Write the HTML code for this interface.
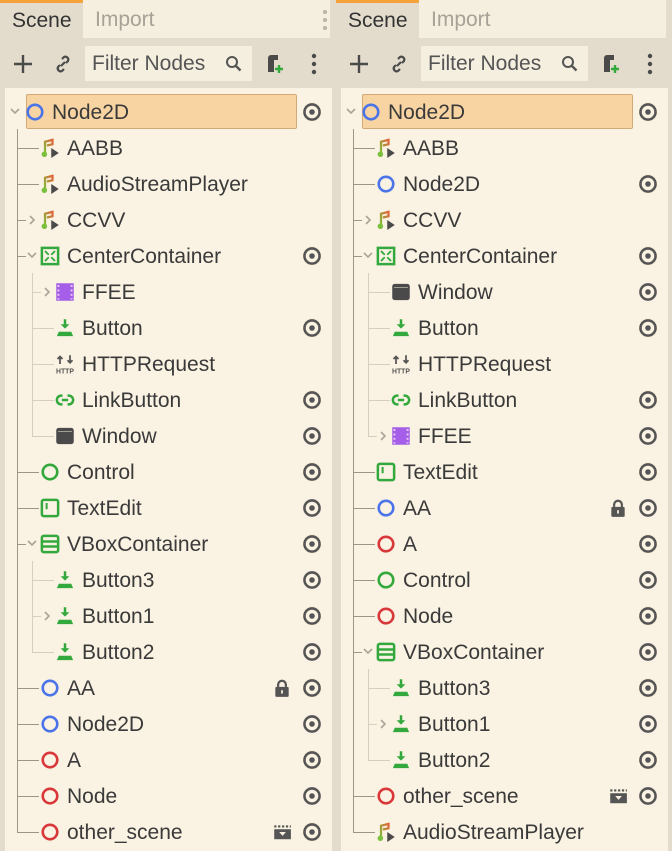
<!DOCTYPE html>
<html><head><meta charset="utf-8"><style>
*{margin:0;padding:0;box-sizing:border-box}
body{width:672px;height:851px;background:#e3dccc;position:relative;overflow:hidden;font-family:"Liberation Sans","DejaVu Sans",sans-serif;color:#3a3a3a}
.p{position:absolute;top:0;width:336px;height:851px}
.tabs{position:absolute;left:0;top:0;width:336px;height:40px}
.scene{position:absolute;left:0;top:0;width:83px;height:40px;background:#e3dccc;border-top:3px solid #f5a33a;font-size:21px;line-height:36px;padding-left:12px;color:#333}
.imp{position:absolute;left:83px;top:0;width:247px;height:38px;background:#f5efe0;font-size:21px;line-height:40px;padding-left:12px;color:#a8a296}
.filter{position:absolute;left:85px;top:46px;width:167px;height:35px;background:#f5efe0;font-size:21px;line-height:36px;padding-left:7px;color:#555}
.tree{position:absolute;left:5px;top:88px;width:327px;height:763px;background:#faf2e2}
.sel{position:absolute;left:26px;top:94px;width:271px;height:35px;background:#f8d4a2;border:1px solid #d3a978;border-radius:2px}
.r{position:absolute;left:0;width:336px;height:36px}
.r .t{position:absolute;top:2px;line-height:36px;font-size:21px;color:#3a3a3a;white-space:nowrap}
.r .ic{position:absolute;top:9px;width:20px;height:20px}
.r .ar{position:absolute;top:13px;width:10px;height:12px}
.r .h{position:absolute;top:19px;height:1px}
.l0 .ic{left:25px}.l0 .t{left:52px}.l0 .ar{left:10px}
.l1 .ic{left:40px}.l1 .t{left:67px}.l1 .ar{left:27px}.l1 .h{left:17px;width:22px;background:#9c958a}
.l1 .h.s{width:9px}
.l2 .ic{left:55px}.l2 .t{left:82px}.l2 .ar{left:42px}.l2 .h{left:32px;width:22px;background:#d6cebd}
.l2 .h.s{width:9px}
.eye{position:absolute;left:302px;top:9px;width:20px;height:20px}
.ex{position:absolute;left:272px;top:9px;width:20px;height:20px}
.v1{position:absolute;left:17px;width:1px;background:#9c958a}
.v2{position:absolute;left:32px;width:1px;background:#d6cebd}
</style></head><body>
<svg width="0" height="0" style="position:absolute">
<defs>
<linearGradient id="ag" x1="0" y1="1" x2="1" y2="0"><stop offset="0" stop-color="#7fbf3a"/><stop offset="1" stop-color="#e2643a"/></linearGradient>
<g id="cb"><circle cx="8" cy="8" r="5.8" fill="none" stroke="#4a74e8" stroke-width="2.1"/></g>
<g id="cr"><circle cx="8" cy="8" r="5.8" fill="none" stroke="#d9383b" stroke-width="2.1"/></g>
<g id="cg"><circle cx="8" cy="8" r="5.8" fill="none" stroke="#33a93d" stroke-width="2.1"/></g>
<g id="au"><path d="M4 13V3l6-1.5v3.5L5.5 6" fill="none" stroke="url(#ag)" stroke-width="1.8"/><circle cx="3.5" cy="13" r="2.2" fill="#7cc03f"/><path d="M9 8l6 4-6 4z" fill="#4a4a4a"/></g>
<g id="cc"><rect x="1.5" y="1.5" width="13" height="13" fill="none" stroke="#33a93d" stroke-width="2"/><path d="M4 4l3 3M12 4l-3 3M4 12l3-3M12 12l-3-3" stroke="#33a93d" stroke-width="1.5"/></g>
<g id="fi"><rect x="1" y="1" width="14" height="14" fill="#a45ee8"/><g fill="#e8d3f8"><rect x="2" y="2.5" width="1.5" height="1.5"/><rect x="2" y="6" width="1.5" height="1.5"/><rect x="2" y="9.5" width="1.5" height="1.5"/><rect x="2" y="13" width="1.5" height="1"/><rect x="12.5" y="2.5" width="1.5" height="1.5"/><rect x="12.5" y="6" width="1.5" height="1.5"/><rect x="12.5" y="9.5" width="1.5" height="1.5"/><rect x="12.5" y="13" width="1.5" height="1"/></g></g>
<g id="bt"><path d="M7 1h2v4h2.5L8 8.5 4.5 5H7z" fill="#33a93d"/><path d="M3 11h10l1.5 3.5h-13z" fill="#33a93d"/></g>
<g id="ht"><path d="M4 8V2M2 4l2-2 2 2M12 1v6M10 5l2 2 2-2" fill="none" stroke="#555" stroke-width="1.4"/><text x="8" y="15.5" font-size="5.5" font-family="Liberation Sans" font-weight="bold" text-anchor="middle" fill="#555">HTTP</text></g>
<g id="lk"><path d="M6 4.5H5a3.5 3.5 0 0 0 0 7h1M10 4.5h1a3.5 3.5 0 0 1 0 7h-1M5.5 8h5" fill="none" stroke="#33a93d" stroke-width="2"/></g>
<g id="wi"><rect x="1" y="1.5" width="14" height="13" rx="2" fill="#4a4a4a"/><rect x="2.5" y="4" width="11" height="0.8" fill="#faf2e2" opacity=".5"/></g>
<g id="te"><rect x="1.5" y="1.5" width="13" height="13" rx="1.5" fill="none" stroke="#33a93d" stroke-width="2"/><rect x="4.5" y="4" width="1.6" height="5" fill="#33a93d"/></g>
<g id="vb"><rect x="1.5" y="1.5" width="13" height="13" rx="1.5" fill="none" stroke="#33a93d" stroke-width="2"/><path d="M2 6h12M2 10h12" stroke="#33a93d" stroke-width="2"/></g>
<g id="ey"><circle cx="9" cy="9" r="6.8" fill="none" stroke="#555" stroke-width="2.3"/><circle cx="9" cy="9" r="2.5" fill="#555"/></g>
<g id="lo"><path d="M5.5 8V6a3.5 3.5 0 0 1 7 0v2" fill="none" stroke="#555" stroke-width="2"/><rect x="3" y="8" width="12" height="9" rx="1" fill="#555"/><rect x="8.2" y="11" width="1.6" height="3" fill="#faf2e2"/></g>
<g id="cl"><path d="M2 4h2M5.5 4h2M9 4h2M12.5 4h2M16 4h1" stroke="#555" stroke-width="2"/><rect x="2" y="6.5" width="15" height="9" fill="#555"/><path d="M6.5 9h6l-3 3.5z" fill="#faf2e2"/></g>
<g id="ad"><path d="M1 3l4 4 4-4" fill="none" stroke="#aaa398" stroke-width="1.6"/></g>
<g id="ar"><path d="M3 2l4 4-4 4" fill="none" stroke="#aaa398" stroke-width="1.6"/></g>
</defs></svg>

<!-- LEFT PANEL -->
<div class="p" style="left:0">
<div class="tabs"><div class="scene">Scene</div><div class="imp">Import</div>
<svg style="position:absolute;left:322px;top:9px" width="6" height="22"><circle cx="3" cy="3" r="2" fill="#bbb4a6"/><circle cx="3" cy="11" r="2" fill="#bbb4a6"/><circle cx="3" cy="19" r="2" fill="#bbb4a6"/></svg></div>
<svg style="position:absolute;left:12px;top:53px" width="22" height="22"><path d="M11 2v18M2 11h18" stroke="#4a4a4a" stroke-width="2.4"/></svg>
<svg style="position:absolute;left:53px;top:54px" width="20" height="20"><path d="M8 12l4-4M9 5l2-2a3 3 0 0 1 4 4l-2 2M11 15l-2 2a3 3 0 0 1-4-4l2-2" fill="none" stroke="#4a4a4a" stroke-width="2.2"/></svg>
<div class="filter">Filter Nodes</div>
<svg style="position:absolute;left:225px;top:55px" width="18" height="18"><circle cx="7" cy="7" r="5" fill="none" stroke="#555" stroke-width="2"/><path d="M10.5 10.5l5 5" stroke="#555" stroke-width="2.4"/></svg>
<svg style="position:absolute;left:264px;top:53px" width="22" height="22"><path d="M4 19V5a3 3 0 0 1 3-3h7v5h-4v12z" fill="#4a4a4a"/><path d="M15 12v8M11 16h8" stroke="#33a93d" stroke-width="2.4"/></svg>
<svg style="position:absolute;left:311px;top:53px" width="6" height="22"><circle cx="3" cy="3" r="2.2" fill="#4a4a4a"/><circle cx="3" cy="11" r="2.2" fill="#4a4a4a"/><circle cx="3" cy="19" r="2.2" fill="#4a4a4a"/></svg>
<div class="tree"></div>
<div class="sel"></div>
<div class="v1" style="top:129px;height:704px"></div>
<div class="v2" style="top:273px;height:164px"></div>
<div class="v2" style="top:561px;height:92px"></div>

<div class="r l0" style="top:93px"><svg class="ar" viewBox="0 0 10 12"><use href="#ad"/></svg><svg class="ic" viewBox="0 0 16 16"><use href="#cb"/></svg><span class="t">Node2D</span><svg class="eye" viewBox="0 0 18 18"><use href="#ey"/></svg></div>
<div class="r l1" style="top:129px"><i class="h"></i><svg class="ic" viewBox="0 0 16 16"><use href="#au"/></svg><span class="t">AABB</span></div>
<div class="r l1" style="top:165px"><i class="h"></i><svg class="ic" viewBox="0 0 16 16"><use href="#au"/></svg><span class="t">AudioStreamPlayer</span></div>
<div class="r l1" style="top:201px"><i class="h s"></i><svg class="ar" viewBox="0 0 10 12"><use href="#ar"/></svg><svg class="ic" viewBox="0 0 16 16"><use href="#au"/></svg><span class="t">CCVV</span></div>
<div class="r l1" style="top:237px"><i class="h s"></i><svg class="ar" viewBox="0 0 10 12"><use href="#ad"/></svg><svg class="ic" viewBox="0 0 16 16"><use href="#cc"/></svg><span class="t">CenterContainer</span><svg class="eye" viewBox="0 0 18 18"><use href="#ey"/></svg></div>
<div class="r l2" style="top:273px"><i class="h s"></i><svg class="ar" viewBox="0 0 10 12"><use href="#ar"/></svg><svg class="ic" viewBox="0 0 16 16"><use href="#fi"/></svg><span class="t">FFEE</span></div>
<div class="r l2" style="top:309px"><i class="h"></i><svg class="ic" viewBox="0 0 16 16"><use href="#bt"/></svg><span class="t">Button</span><svg class="eye" viewBox="0 0 18 18"><use href="#ey"/></svg></div>
<div class="r l2" style="top:345px"><i class="h"></i><svg class="ic" viewBox="0 0 16 16"><use href="#ht"/></svg><span class="t">HTTPRequest</span></div>
<div class="r l2" style="top:381px"><i class="h"></i><svg class="ic" viewBox="0 0 16 16"><use href="#lk"/></svg><span class="t">LinkButton</span><svg class="eye" viewBox="0 0 18 18"><use href="#ey"/></svg></div>
<div class="r l2" style="top:417px"><i class="h"></i><svg class="ic" viewBox="0 0 16 16"><use href="#wi"/></svg><span class="t">Window</span><svg class="eye" viewBox="0 0 18 18"><use href="#ey"/></svg></div>
<div class="r l1" style="top:453px"><i class="h"></i><svg class="ic" viewBox="0 0 16 16"><use href="#cg"/></svg><span class="t">Control</span><svg class="eye" viewBox="0 0 18 18"><use href="#ey"/></svg></div>
<div class="r l1" style="top:489px"><i class="h"></i><svg class="ic" viewBox="0 0 16 16"><use href="#te"/></svg><span class="t">TextEdit</span><svg class="eye" viewBox="0 0 18 18"><use href="#ey"/></svg></div>
<div class="r l1" style="top:525px"><i class="h s"></i><svg class="ar" viewBox="0 0 10 12"><use href="#ad"/></svg><svg class="ic" viewBox="0 0 16 16"><use href="#vb"/></svg><span class="t">VBoxContainer</span><svg class="eye" viewBox="0 0 18 18"><use href="#ey"/></svg></div>
<div class="r l2" style="top:561px"><i class="h"></i><svg class="ic" viewBox="0 0 16 16"><use href="#bt"/></svg><span class="t">Button3</span><svg class="eye" viewBox="0 0 18 18"><use href="#ey"/></svg></div>
<div class="r l2" style="top:597px"><i class="h s"></i><svg class="ar" viewBox="0 0 10 12"><use href="#ar"/></svg><svg class="ic" viewBox="0 0 16 16"><use href="#bt"/></svg><span class="t">Button1</span><svg class="eye" viewBox="0 0 18 18"><use href="#ey"/></svg></div>
<div class="r l2" style="top:633px"><i class="h"></i><svg class="ic" viewBox="0 0 16 16"><use href="#bt"/></svg><span class="t">Button2</span><svg class="eye" viewBox="0 0 18 18"><use href="#ey"/></svg></div>
<div class="r l1" style="top:669px"><i class="h"></i><svg class="ic" viewBox="0 0 16 16"><use href="#cb"/></svg><span class="t">AA</span><svg class="ex" viewBox="0 0 18 18"><use href="#lo"/></svg><svg class="eye" viewBox="0 0 18 18"><use href="#ey"/></svg></div>
<div class="r l1" style="top:705px"><i class="h"></i><svg class="ic" viewBox="0 0 16 16"><use href="#cb"/></svg><span class="t">Node2D</span><svg class="eye" viewBox="0 0 18 18"><use href="#ey"/></svg></div>
<div class="r l1" style="top:741px"><i class="h"></i><svg class="ic" viewBox="0 0 16 16"><use href="#cr"/></svg><span class="t">A</span><svg class="eye" viewBox="0 0 18 18"><use href="#ey"/></svg></div>
<div class="r l1" style="top:777px"><i class="h"></i><svg class="ic" viewBox="0 0 16 16"><use href="#cr"/></svg><span class="t">Node</span><svg class="eye" viewBox="0 0 18 18"><use href="#ey"/></svg></div>
<div class="r l1" style="top:813px"><i class="h"></i><svg class="ic" viewBox="0 0 16 16"><use href="#cr"/></svg><span class="t">other_scene</span><svg class="ex" viewBox="0 0 18 18"><use href="#cl"/></svg><svg class="eye" viewBox="0 0 18 18"><use href="#ey"/></svg></div>
</div>

<!-- RIGHT PANEL -->
<div class="p" style="left:336px">
<div class="tabs"><div class="scene">Scene</div><div class="imp">Import</div></div>
<svg style="position:absolute;left:12px;top:53px" width="22" height="22"><path d="M11 2v18M2 11h18" stroke="#4a4a4a" stroke-width="2.4"/></svg>
<svg style="position:absolute;left:53px;top:54px" width="20" height="20"><path d="M8 12l4-4M9 5l2-2a3 3 0 0 1 4 4l-2 2M11 15l-2 2a3 3 0 0 1-4-4l2-2" fill="none" stroke="#4a4a4a" stroke-width="2.2"/></svg>
<div class="filter">Filter Nodes</div>
<svg style="position:absolute;left:225px;top:55px" width="18" height="18"><circle cx="7" cy="7" r="5" fill="none" stroke="#555" stroke-width="2"/><path d="M10.5 10.5l5 5" stroke="#555" stroke-width="2.4"/></svg>
<svg style="position:absolute;left:264px;top:53px" width="22" height="22"><path d="M4 19V5a3 3 0 0 1 3-3h7v5h-4v12z" fill="#4a4a4a"/><path d="M15 12v8M11 16h8" stroke="#33a93d" stroke-width="2.4"/></svg>
<svg style="position:absolute;left:311px;top:53px" width="6" height="22"><circle cx="3" cy="3" r="2.2" fill="#4a4a4a"/><circle cx="3" cy="11" r="2.2" fill="#4a4a4a"/><circle cx="3" cy="19" r="2.2" fill="#4a4a4a"/></svg>
<div class="tree"></div>
<div class="sel"></div>
<div class="v1" style="top:129px;height:704px"></div>
<div class="v2" style="top:273px;height:164px"></div>
<div class="v2" style="top:669px;height:92px"></div>

<div class="r l0" style="top:93px"><svg class="ar" viewBox="0 0 10 12"><use href="#ad"/></svg><svg class="ic" viewBox="0 0 16 16"><use href="#cb"/></svg><span class="t">Node2D</span><svg class="eye" viewBox="0 0 18 18"><use href="#ey"/></svg></div>
<div class="r l1" style="top:129px"><i class="h"></i><svg class="ic" viewBox="0 0 16 16"><use href="#au"/></svg><span class="t">AABB</span></div>
<div class="r l1" style="top:165px"><i class="h"></i><svg class="ic" viewBox="0 0 16 16"><use href="#cb"/></svg><span class="t">Node2D</span><svg class="eye" viewBox="0 0 18 18"><use href="#ey"/></svg></div>
<div class="r l1" style="top:201px"><i class="h s"></i><svg class="ar" viewBox="0 0 10 12"><use href="#ar"/></svg><svg class="ic" viewBox="0 0 16 16"><use href="#au"/></svg><span class="t">CCVV</span></div>
<div class="r l1" style="top:237px"><i class="h s"></i><svg class="ar" viewBox="0 0 10 12"><use href="#ad"/></svg><svg class="ic" viewBox="0 0 16 16"><use href="#cc"/></svg><span class="t">CenterContainer</span><svg class="eye" viewBox="0 0 18 18"><use href="#ey"/></svg></div>
<div class="r l2" style="top:273px"><i class="h"></i><svg class="ic" viewBox="0 0 16 16"><use href="#wi"/></svg><span class="t">Window</span><svg class="eye" viewBox="0 0 18 18"><use href="#ey"/></svg></div>
<div class="r l2" style="top:309px"><i class="h"></i><svg class="ic" viewBox="0 0 16 16"><use href="#bt"/></svg><span class="t">Button</span><svg class="eye" viewBox="0 0 18 18"><use href="#ey"/></svg></div>
<div class="r l2" style="top:345px"><i class="h"></i><svg class="ic" viewBox="0 0 16 16"><use href="#ht"/></svg><span class="t">HTTPRequest</span></div>
<div class="r l2" style="top:381px"><i class="h"></i><svg class="ic" viewBox="0 0 16 16"><use href="#lk"/></svg><span class="t">LinkButton</span><svg class="eye" viewBox="0 0 18 18"><use href="#ey"/></svg></div>
<div class="r l2" style="top:417px"><i class="h s"></i><svg class="ar" viewBox="0 0 10 12"><use href="#ar"/></svg><svg class="ic" viewBox="0 0 16 16"><use href="#fi"/></svg><span class="t">FFEE</span><svg class="eye" viewBox="0 0 18 18"><use href="#ey"/></svg></div>
<div class="r l1" style="top:453px"><i class="h"></i><svg class="ic" viewBox="0 0 16 16"><use href="#te"/></svg><span class="t">TextEdit</span><svg class="eye" viewBox="0 0 18 18"><use href="#ey"/></svg></div>
<div class="r l1" style="top:489px"><i class="h"></i><svg class="ic" viewBox="0 0 16 16"><use href="#cb"/></svg><span class="t">AA</span><svg class="ex" viewBox="0 0 18 18"><use href="#lo"/></svg><svg class="eye" viewBox="0 0 18 18"><use href="#ey"/></svg></div>
<div class="r l1" style="top:525px"><i class="h"></i><svg class="ic" viewBox="0 0 16 16"><use href="#cr"/></svg><span class="t">A</span><svg class="eye" viewBox="0 0 18 18"><use href="#ey"/></svg></div>
<div class="r l1" style="top:561px"><i class="h"></i><svg class="ic" viewBox="0 0 16 16"><use href="#cg"/></svg><span class="t">Control</span><svg class="eye" viewBox="0 0 18 18"><use href="#ey"/></svg></div>
<div class="r l1" style="top:597px"><i class="h"></i><svg class="ic" viewBox="0 0 16 16"><use href="#cr"/></svg><span class="t">Node</span><svg class="eye" viewBox="0 0 18 18"><use href="#ey"/></svg></div>
<div class="r l1" style="top:633px"><i class="h s"></i><svg class="ar" viewBox="0 0 10 12"><use href="#ad"/></svg><svg class="ic" viewBox="0 0 16 16"><use href="#vb"/></svg><span class="t">VBoxContainer</span><svg class="eye" viewBox="0 0 18 18"><use href="#ey"/></svg></div>
<div class="r l2" style="top:669px"><i class="h"></i><svg class="ic" viewBox="0 0 16 16"><use href="#bt"/></svg><span class="t">Button3</span><svg class="eye" viewBox="0 0 18 18"><use href="#ey"/></svg></div>
<div class="r l2" style="top:705px"><i class="h s"></i><svg class="ar" viewBox="0 0 10 12"><use href="#ar"/></svg><svg class="ic" viewBox="0 0 16 16"><use href="#bt"/></svg><span class="t">Button1</span><svg class="eye" viewBox="0 0 18 18"><use href="#ey"/></svg></div>
<div class="r l2" style="top:741px"><i class="h"></i><svg class="ic" viewBox="0 0 16 16"><use href="#bt"/></svg><span class="t">Button2</span><svg class="eye" viewBox="0 0 18 18"><use href="#ey"/></svg></div>
<div class="r l1" style="top:777px"><i class="h"></i><svg class="ic" viewBox="0 0 16 16"><use href="#cr"/></svg><span class="t">other_scene</span><svg class="ex" viewBox="0 0 18 18"><use href="#cl"/></svg><svg class="eye" viewBox="0 0 18 18"><use href="#ey"/></svg></div>
<div class="r l1" style="top:813px"><i class="h"></i><svg class="ic" viewBox="0 0 16 16"><use href="#au"/></svg><span class="t">AudioStreamPlayer</span></div>
</div>
</body></html>
